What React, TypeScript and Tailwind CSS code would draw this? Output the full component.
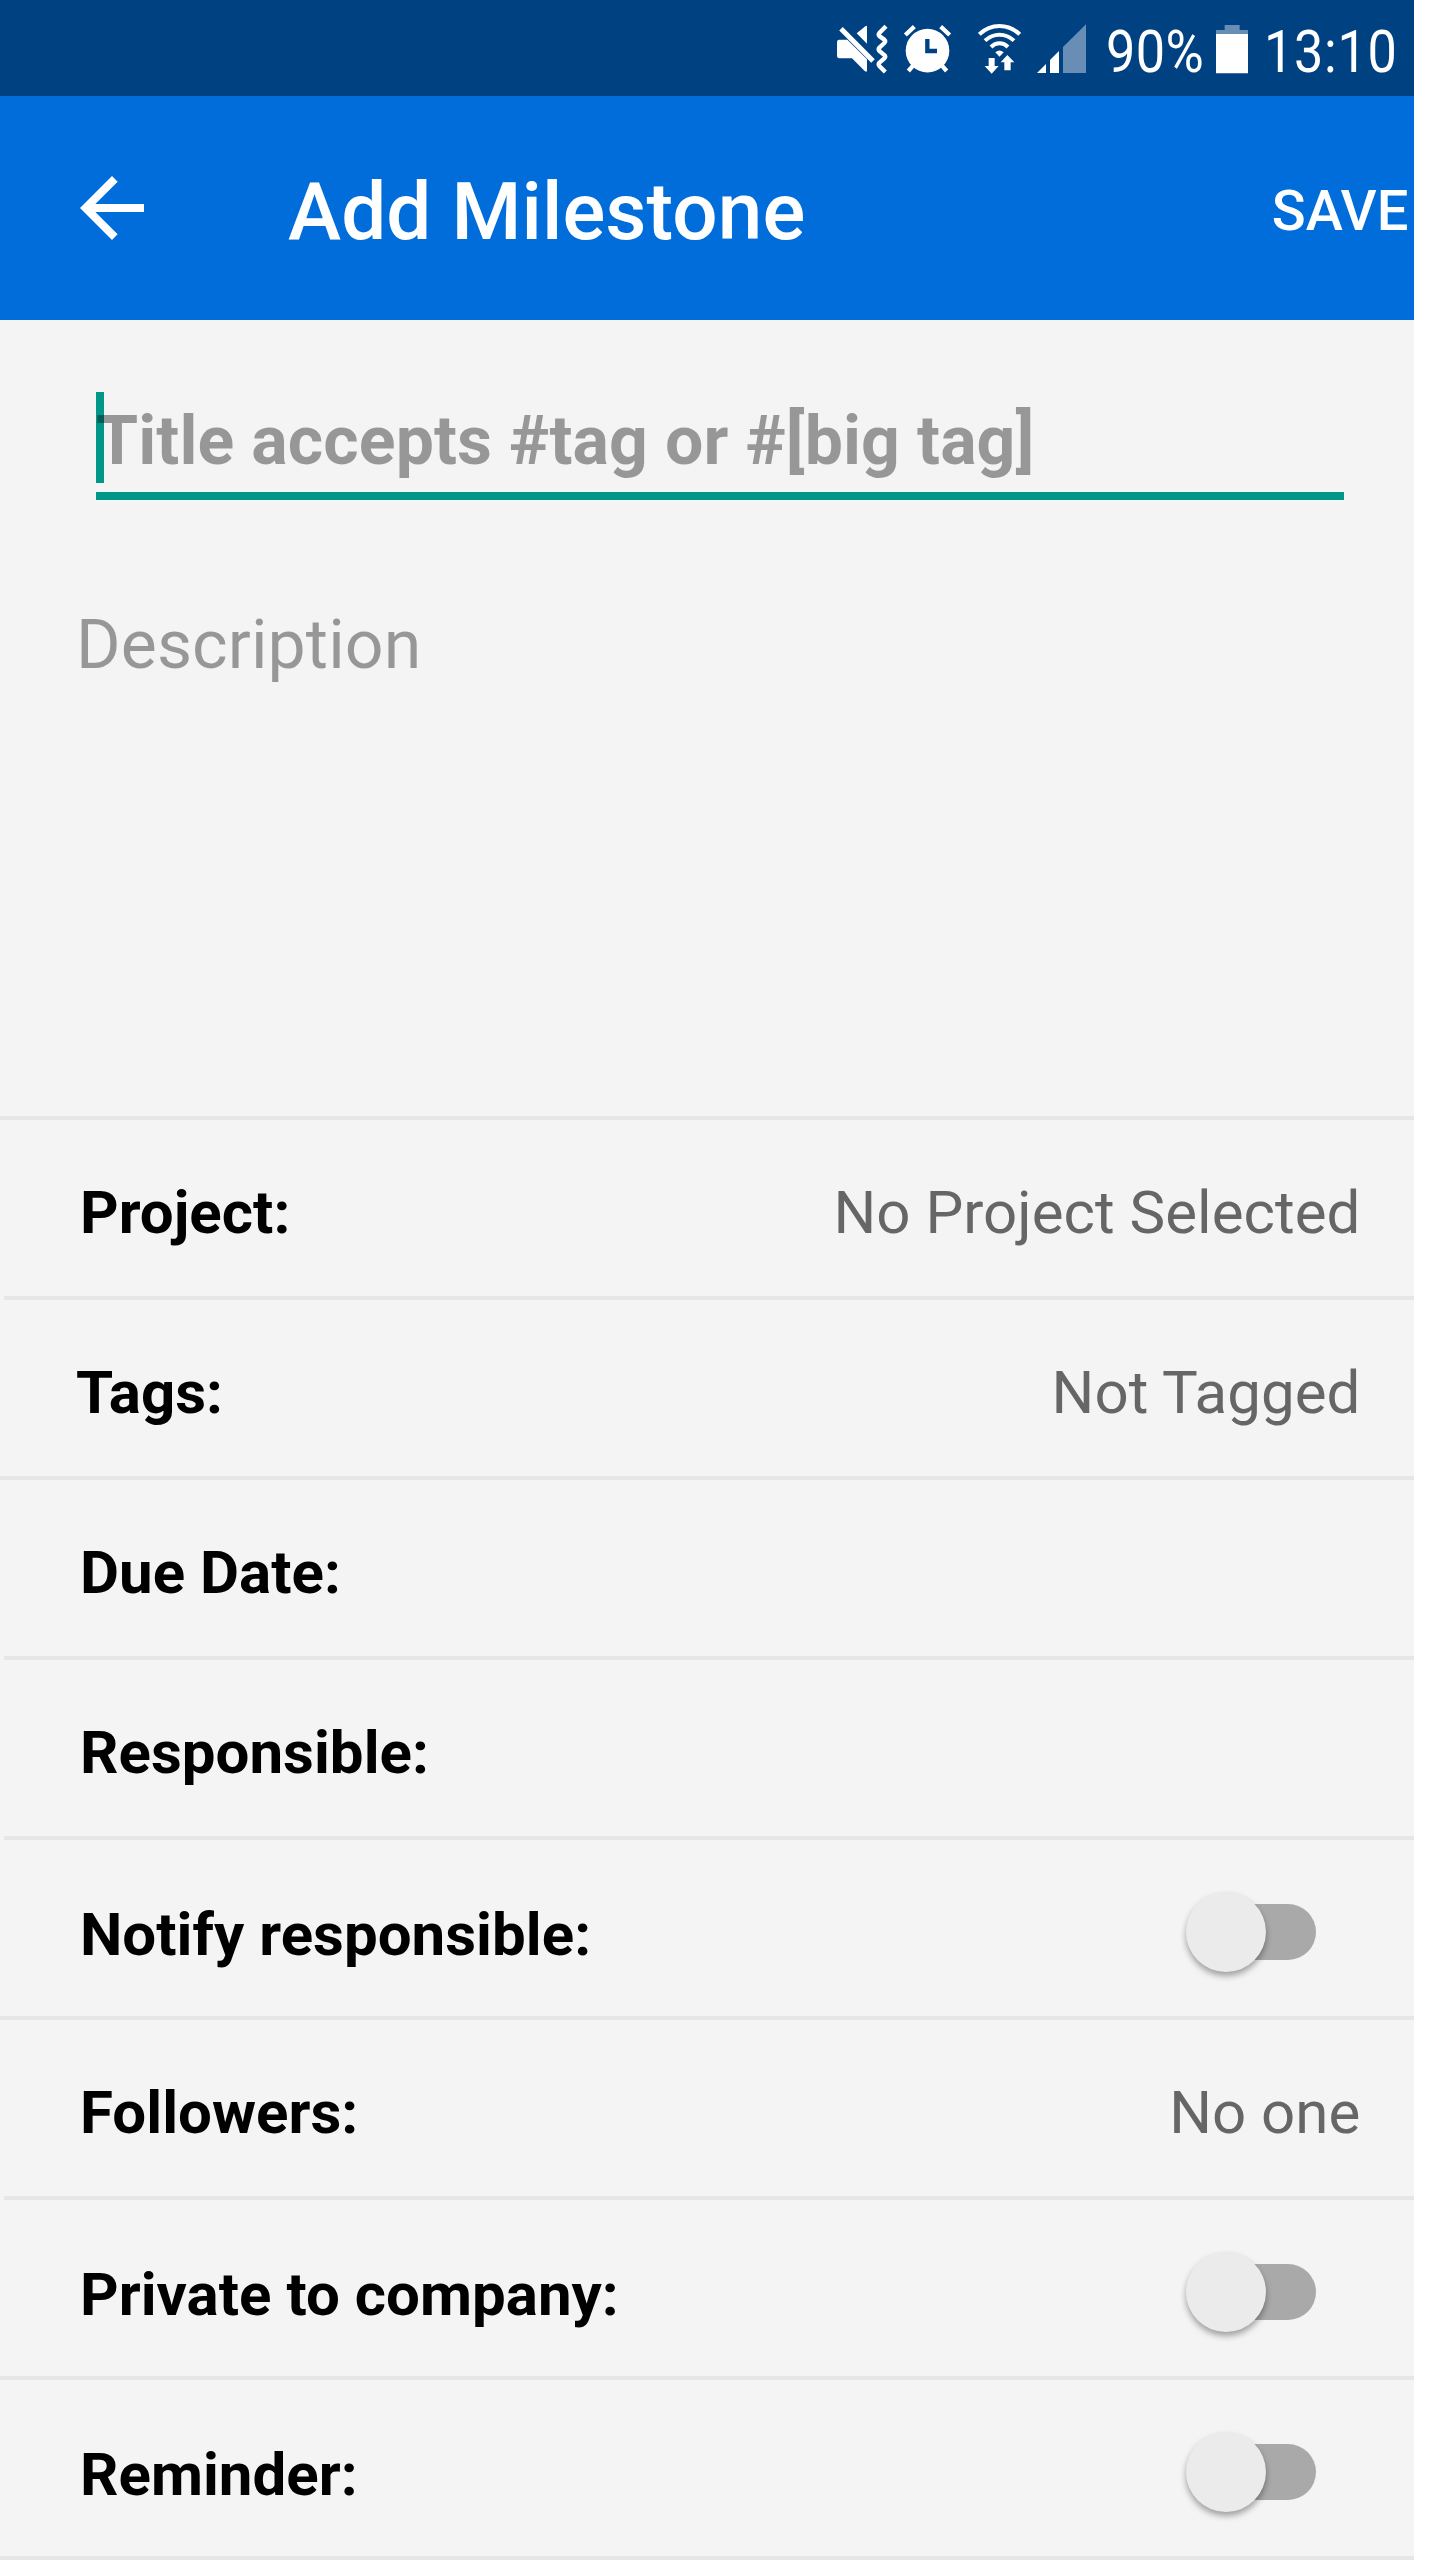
import { useState } from 'react';

function MuteIcon() {
  return (
    <svg className="w-[51px] h-[50px] shrink-0" viewBox="51 72 153 150" fill="#fff">
      <path d="M110 100L136 79Q141 75 141 81V131Z" />
      <path d="M58 119H82L141 178V211Q141 218 134 213L96 175H58Q51 175 51 168V126Q51 119 58 119Z" />
      <path d="M63 86L159 183" stroke="#fff" strokeWidth="15" />
      <path d="M198 79L178 99Q174 104 178 108L193 119Q198 124 193 129L178 143Q174 148 178 153L193 165Q198 170 193 175L178 188Q174 193 178 198L196 216" fill="none" stroke="#fff" strokeWidth="13" />
    </svg>
  );
}

function AlarmIcon() {
  return (
    <svg className="w-[49px] h-[50px] shrink-0" viewBox="249 72 147 150">
      <circle cx="322.500" cy="152" r="65.500" fill="#fff" />
      <path d="M256 105L283 80M389 105L362 80" stroke="#fff" strokeWidth="13" />
      <path d="M265 213L282 194M380 213L363 194" stroke="#fff" strokeWidth="13" />
      <path d="M322 117V153H351" fill="none" stroke="#004182" strokeWidth="13" />
    </svg>
  );
}

function WifiIcon() {
  return (
    <svg className="w-[43px] h-[50px] shrink-0" viewBox="474 72 129 150">
      <g fill="none" stroke="#fff" strokeWidth="12">
        <path d="M478 103Q504 78 538.500 78T599 103" />
        <path d="M495 122Q514 104 538.500 104T582 122" />
        <path d="M513 141Q524 130 538.500 130T564 141" />
      </g>
      <path d="M526 157Q538.500 146 551 157L538.500 170Z" fill="#fff" />
      <path d="M506 174H524V198H536L515 221L494 198H506Z" fill="#fff" />
      <path d="M553 211V187H542L562 165L583 187H572V211Z" fill="#fff" />
    </svg>
  );
}

function SignalIcon() {
  return (
    <svg className="w-[51px] h-[50px] shrink-0" viewBox="648 72 153 150" fill="#fff">
      <path d="M651 219L678 192V219Z" />
      <path d="M690 219V180L717 153V219Z" />
      <path d="M729 219V141L798 73V219Z" fill="#688eb6" />
    </svg>
  );
}

function BatteryIcon() {
  return (
    <svg className="w-8 h-[50px] shrink-0" viewBox="378 72 96 150">
      <path d="M404 75H449V90H474V102H378V90H404Z" fill="#688eb6" />
      <path d="M378 102H474V220H378Z" fill="#fff" />
    </svg>
  );
}

function StatusBar() {
  return (
    <div className="flex items-center h-24 pt-0.5 pl-[837px] bg-[#004182] text-white text-[60px] leading-none whitespace-nowrap">
      <MuteIcon />
      <div className="ml-[15px] flex"><AlarmIcon /></div>
      <div className="ml-[26px] flex"><WifiIcon /></div>
      <div className="ml-[15px] flex"><SignalIcon /></div>
      <div className="w-[98px] ml-[19px] pt-1.5">
        <span className="inline-block origin-left scale-x-[0.87] tracking-[0.5px]">90%</span>
      </div>
      <div className="ml-3 flex"><BatteryIcon /></div>
      <div className="ml-4 pt-1.5">
        <span className="inline-block origin-left scale-x-[0.87] tracking-[0.8px]">13:10</span>
      </div>
    </div>
  );
}

function Toggle() {
  const [on, setOn] = useState(false);

  return (
    <button
      role="switch"
      aria-checked={on}
      onClick={() => setOn(!on)}
      className="relative mt-2 mr-[38px] w-[124px] h-14 rounded-full bg-[#a9a9a9]"
    >
      <span
        className={`absolute -top-3 size-20 rounded-full bg-[#ebebeb] shadow-[0_4px_6px_rgba(0,0,0,0.35)] ${on ? 'left-[50px]' : '-left-1.5'}`}
      />
    </button>
  );
}

interface Field {
  label: string;
  value?: string;
  toggle?: boolean;
  labelClass?: string;
  lineClass: string;
}

const fields: Field[] = [
  { label: 'Project:', value: 'No Project Selected', lineClass: 'ml-1' },
  { label: 'Tags:', value: 'Not Tagged', labelClass: '-ml-1', lineClass: 'ml-0' },
  { label: 'Due Date:', lineClass: 'ml-1' },
  { label: 'Responsible:', lineClass: 'ml-1' },
  { label: 'Notify responsible:', toggle: true, labelClass: 'pt-1', lineClass: 'ml-0' },
  { label: 'Followers:', value: 'No one', lineClass: 'ml-1' },
  { label: 'Private to company:', toggle: true, labelClass: 'pt-1', lineClass: 'ml-0' },
  { label: 'Reminder:', toggle: true, labelClass: 'pt-1', lineClass: 'ml-0' },
];

function FieldRow({ label, value, toggle, labelClass = '', lineClass }: Field) {
  return (
    <div>
      <div className="flex items-center justify-between h-44 pl-20 pr-[54px] text-[60px] leading-[81px] tracking-[0.03px]">
        <span className={`mt-[9px] font-bold text-black ${labelClass}`}>{label}</span>
        {value && <span className="mt-[9px] text-[#666]">{value}</span>}
        {toggle && <span className="flex mr-1.5"><Toggle /></span>}
      </div>
      <div className={`h-1 bg-[#e6e6e6] ${lineClass}`} />
    </div>
  );
}

export default function App() {
  return (
    <div className="w-[1440px] h-[2560px] overflow-hidden bg-white font-['Roboto',sans-serif]">
      <div className="w-[1414.4px] h-full bg-[#f4f4f4]">
        <StatusBar />

        {/* App bar */}
        <header className="flex items-center h-56 pl-16 pr-1.5 bg-[#006ddb] text-white font-medium">
          <button aria-label="Back">
            <svg className="size-24" viewBox="0 0 24 24" fill="currentColor">
              <path d="M20 11H7.830l5.590-5.590L12 4l-8 8 8 8 1.410-1.410L7.830 13H20v-2z" />
            </svg>
          </button>
          <h1 className="ml-32 mt-[7px] text-[80px] leading-[96px] tracking-[0.08px]">Add Milestone</h1>
          <button className="ml-auto mt-1.5 text-[56px] leading-[72px]">SAVE</button>
        </header>

        {/* Title and description inputs */}
        <section className="h-[796px] pt-[72px]">
          <div className="relative ml-24 w-[1248px] h-[108px] border-b-8 border-[#009688]">
            <span className="absolute left-0 top-0 w-2 h-[91px] bg-[#009688]" />
            <p className="relative pt-px text-[68px] leading-[96px] tracking-[0.09px] font-bold text-black/38">Title accepts #tag or #[big tag]</p>
          </div>
          <p className="pl-[76px] pt-[105px] text-[68px] leading-[80px] tracking-[0.1px] text-black/38">Description</p>
        </section>
        <div className="h-1 bg-[#e6e6e6]" />

        {fields.map((field) => (
          <FieldRow key={field.label} {...field} />
        ))}
      </div>
    </div>
  );
}
